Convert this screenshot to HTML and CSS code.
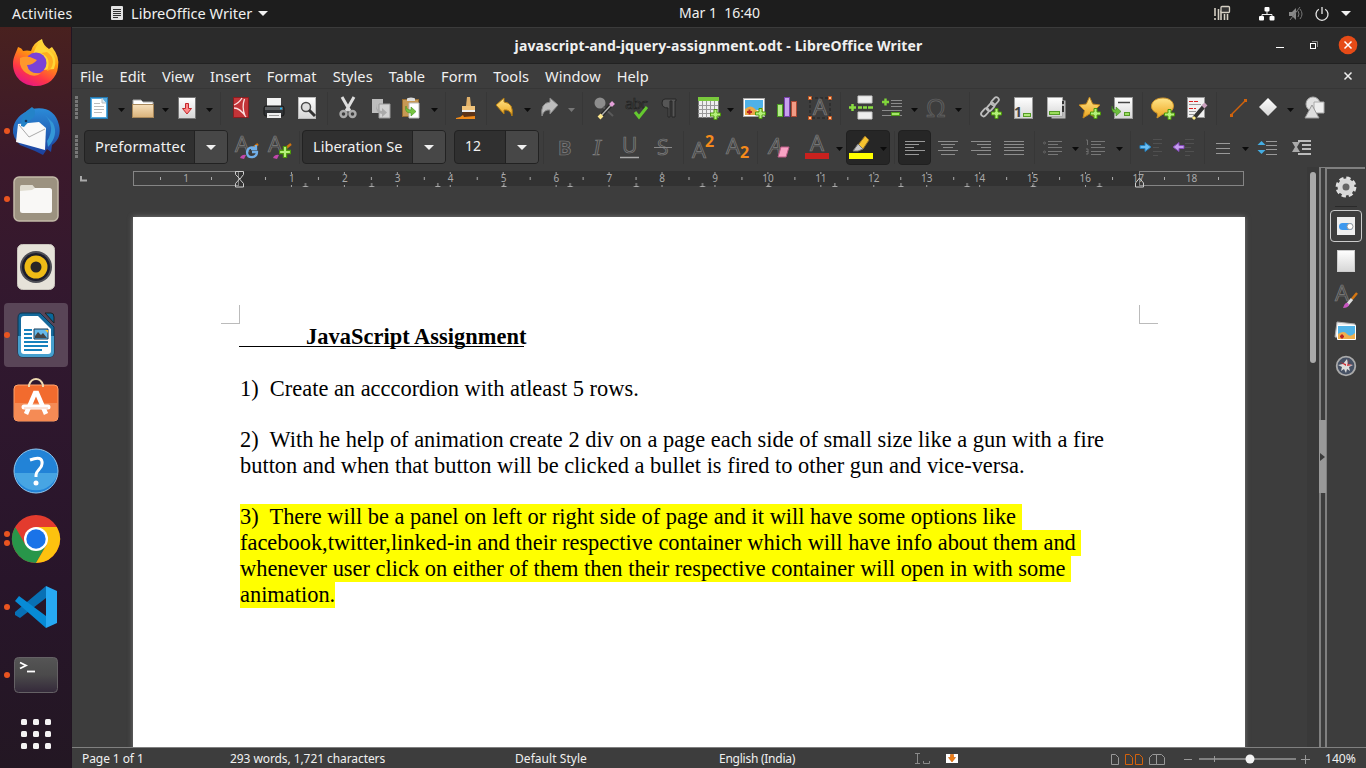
FILE: index.html
```html
<!DOCTYPE html>
<html lang="en">
<head>
<meta charset="utf-8">
<title>javascript-and-jquery-assignment.odt - LibreOffice Writer</title>
<link rel="stylesheet" href="styles.css">
</head>
<body>
<svg class="defs" width="0" height="0">
<defs>
<linearGradient id="paper" x2="0" y2="1"><stop stop-color="#fff"/><stop offset="1" stop-color="#d6d6d6"/></linearGradient>
<linearGradient id="gold" x2="0" y2="1"><stop stop-color="#ffe58a"/><stop offset="1" stop-color="#eda41c"/></linearGradient>
<linearGradient id="folder" x2="0" y2="1"><stop stop-color="#f6dfbb"/><stop offset="1" stop-color="#d9b27a"/></linearGradient>
<linearGradient id="fox" x1=".8" y1="0" x2=".3" y2="1"><stop stop-color="#fff44f"/><stop offset=".4" stop-color="#ff980e"/><stop offset=".75" stop-color="#ff3647"/><stop offset="1" stop-color="#e31587"/></linearGradient>
<linearGradient id="bird" x2="0" y2="1"><stop stop-color="#2b8bd8"/><stop offset="1" stop-color="#1c3f9c"/></linearGradient>
<linearGradient id="term" x2="0" y2="1"><stop stop-color="#555"/><stop offset=".5" stop-color="#4b4a4b"/><stop offset="1" stop-color="#34293a"/></linearGradient>
<symbol id="down" viewBox="0 0 8 5" preserveAspectRatio="none"><path d="M0 0h8L4 5z" fill="currentColor"/></symbol>
<symbol id="plus" viewBox="0 0 11 11"><path d="M4 .5h3V4h3.500v3H7v3.500H4V7H.5V4H4z" fill="#b5f07a" stroke="#4c9a0a"/></symbol>
</defs>
</svg>

<header class="topbar">
  <span class="activities">Activities</span>
  <svg class="doc-ic" width="12" height="15"><rect width="12" height="14" rx="1" fill="#e3e3e3"/><path d="M2 3.500h8M2 5.500h8M2 7.500h8M2 9.500h8M2 11.500h5" stroke="#333"/></svg>
  <span class="app">LibreOffice Writer</span>
  <svg class="app-arrow" width="10" height="5"><use href="#down"/></svg>
  <span class="clock">Mar 1&nbsp; 16:40</span>
  <div class="tray">
    <svg width="18" height="16"><path d="M1 2v8M1 12v2M4.500 3v11M7 14V6q0-2 3-2M10.500 8v6M13.500 8v6" stroke="#d5cfc3" stroke-width="1.600" fill="none"/><rect x="7" y=".5" width="8.500" height="6" rx="1" fill="#333" stroke="#d5cfc3" stroke-width="1.300"/></svg>
    <svg width="16" height="14"><path d="M8 4v3M3 10V7.500h10V10" stroke="#eee" fill="none"/><rect x="5.500" y="0" width="5" height="4.500" rx="1" fill="#fff"/><rect x="0" y="9" width="5" height="4.500" rx="1" fill="#fff"/><rect x="10.500" y="9" width="5" height="4.500" rx="1" fill="#fff"/></svg>
    <svg width="16" height="16"><path d="M1 6h3l4-4v12L4 10H1z" fill="#888"/><path d="M10 5q2 3 0 6M12 3q4 5 0 10M2 14L12 1" stroke="#777" fill="none"/></svg>
    <svg width="14" height="14"><path d="M3.800 2.200a6 6 0 1 0 6.400 0M7 0v7" stroke="#e8e8e8" stroke-width="1.300" fill="none"/></svg>
    <svg width="10" height="5"><use href="#down"/></svg>
  </div>
</header>

<div class="desktop">
<nav class="dock">
  <div class="app-ic i1"><svg width="46" height="48" viewBox="0 0 46 48"><path d="M5 8Q9 9 10 12Q14 11 18 12Q20 4 29 0Q30 6 36 10L39 8Q47 18 45 28C44 39 35 47 23 47C10 47 0 38 0 25C0 18 3 14 5 8Z" fill="url(#fox)"/><path d="M28 1Q29 8 38 13Q45 19 41 30L30 31L20 15Q23 7 28 1Z" fill="#ffd536"/><circle cx="23" cy="24" r="10.500" fill="#7b42d6"/><path d="M7 19Q11 17 17 18L24 21Q20 26 14 26Q16 36 28 34Q24 38 17 36Q9 33 7 25Z" fill="#ff972c"/><path d="M28 14Q39 18 34 32Q39 31 40 23Q40 17 34 13Z" fill="#ffad20"/></svg></div>
  <div class="app-ic i2 running"><svg width="48" height="48" viewBox="0 0 48 48"><path d="M20 2Q42 -2 47 18Q50 31 40 38L39 45L35 42L31 48L23 44L8 38Q0 30 1 22Q3 8 20 2Z" fill="url(#bird)"/><path d="M33 8Q44 20 35 34L36 40Q47 28 41 16Z" fill="#3497d6"/><path d="M6 17L27 15L34 21L33 43L4 35Z" fill="#fafafa"/><path d="M7 18L17 30L33 22" stroke="#aaa" fill="none"/><path d="M9 19Q8 7 20 0Q25 3 22 10Q17 14 12 20Z" fill="#2483c8"/><circle cx="14" cy="14" r="1.300" fill="#16365c"/></svg></div>
  <div class="app-ic i3 running"><svg width="46" height="46"><rect x="1" y="1" width="44" height="44" rx="5" fill="#9c9280" stroke="#c3baa8" stroke-width="1.500"/><rect x="7" y="12" width="32" height="25" rx="2.500" fill="#f9f8f6"/><path d="M7 15V11q0-2 1.500-2h11l2.500 3-3 2z" fill="#e0dcd0"/></svg></div>
  <div class="app-ic i4"><svg width="38" height="46"><rect x=".5" y=".5" width="37" height="45" rx="5" fill="#e6e2d9" stroke="#c9c5bd"/><circle cx="19" cy="23" r="16" fill="#4e4e55"/><circle cx="19" cy="23" r="14" fill="#1c1d2b"/><circle cx="19" cy="23" r="11.500" fill="#eebb16"/><circle cx="19" cy="23" r="5.500" fill="#282626"/></svg></div>
  <div class="app-ic i5 running active"><svg width="38" height="46"><path d="M5 1H23L37 15V40q0 5-5 5H6q-5 0-5-5V6q0-5 4-5z" fill="#15699b" stroke="#0d3650"/><path d="M1 24H37V40q0 5-5 5H6q-5 0-5-5z" fill="#459fce"/><path d="M28 1h6q3 0 3 4v6z" fill="#09679b" stroke="#222"/><path d="M7 4H21L34 17V39q0 3-3 3H7q-3 0-3-3V7q0-3 3-3z" fill="#fff"/><path d="M7 18h8M7 22h8M7 26h8M7 30h24M7 34h24M7 38h18" stroke="#1681bd" stroke-width="2"/><path d="M17 17h14v10H17z" fill="#65b9ea" stroke="#183d58"/><path d="M28 18h3v3z" fill="#ffc627"/><path d="M18 26v-2l3-4 3 3 2-2 4 5z" fill="#444"/></svg></div>
  <div class="app-ic i6"><svg width="46" height="44"><rect x="1" y="7" width="44" height="36" rx="4" fill="#f26b2e" stroke="#ffa36c"/><path d="M1.500 25h43v14q0 3.500-3.500 3.500H5q-3.500 0-3.500-3.500z" fill="#f58b55"/><path d="M16 9V7q2-6 7-6t7 6v2" stroke="#eed9b0" stroke-width="2" fill="none"/><path d="M13 36L22 15h2l9 21" stroke="#fff" stroke-width="4.500" fill="none"/><path d="M11 29h24" stroke="#fff" stroke-width="5" stroke-linecap="round"/><path d="M11 30h24" stroke="#f8cbb7"/></svg></div>
  <div class="app-ic i7"><svg width="46" height="46"><circle cx="23" cy="23" r="22" fill="#2283d7" stroke="#8fc7ef"/><path d="M1.500 25h43A22 22 0 0 1 1.500 25" fill="#47a5e3"/><path d="M17 12q13-5 12 4c0 5-6 6-6 11v2" stroke="#fff" stroke-width="3" fill="none"/><circle cx="23" cy="35" r="2.500" fill="#fff"/></svg></div>
  <div class="app-ic i8 running two"><svg width="48" height="48"><circle cx="24" cy="24" r="24" fill="#e33b2e"/><path d="M3.200 12A24 24 0 0 0 24 48L35 29L24 24Z" fill="#28964a"/><path d="M24 48A24 24 0 0 0 44.800 12H24L34.500 30Z" fill="#fdc20f"/><path d="M3.200 12L13.500 30L24 24V12Z" fill="#e33b2e"/><circle cx="24" cy="24" r="12" fill="#fff"/><circle cx="24" cy="24" r="9.700" fill="#1a73e8"/></svg></div>
  <div class="app-ic i9 running"><svg width="42" height="42"><path d="M0 26L31 0V12L5 32L0 29Z" fill="#0870b5"/><path d="M0 15L4 10L31 30V42Q15 28 0 15Z" fill="#078bd6"/><path d="M31 0L42 5V37L31 42Z" fill="#27a9f3"/></svg></div>
  <div class="app-ic i10 running"><svg width="44" height="36"><rect x=".5" y=".5" width="43" height="35" rx="4" fill="url(#term)" stroke="#656165"/><path d="M6 5.500l6 3-6 3" stroke="#fff" stroke-width="1.800" fill="none"/><path d="M13 14.500h8" stroke="#fff" stroke-width="1.800"/></svg></div>
  <div class="app-ic i11"><svg width="30" height="30"><g fill="#f4f2f3"><rect width="6" height="6" rx="1.500"/><rect x="12" width="6" height="6" rx="1.500"/><rect x="24" width="6" height="6" rx="1.500"/><rect y="12" width="6" height="6" rx="1.500"/><rect x="12" y="12" width="6" height="6" rx="1.500"/><rect x="24" y="12" width="6" height="6" rx="1.500"/><rect y="24" width="6" height="6" rx="1.500"/><rect x="12" y="24" width="6" height="6" rx="1.500"/><rect x="24" y="24" width="6" height="6" rx="1.500"/></g></svg></div>
</nav>

<main class="window">
  <div class="titlebar">
    <h1>javascript-and-jquery-assignment.odt - LibreOffice Writer</h1>
    <div class="win-btns">
      <svg width="10" height="10"><path d="M2 7.500h8" stroke="#fff"/></svg>
      <svg width="10" height="10"><path d="M4 1.500h5.500v5.500" stroke="#888" fill="none"/><rect x="2.500" y="3.500" width="5" height="5" fill="none" stroke="#fff"/></svg>
      <svg width="20" height="20"><circle cx="10" cy="10" r="9.300" fill="#e64b17"/><path d="M6.500 6.500l7 7M13.500 6.500l-7 7" stroke="#fff" stroke-width="1.500"/></svg>
    </div>
  </div>
  <div class="menubar">
    <span>File</span><span>Edit</span><span>View</span><span>Insert</span><span>Format</span><span>Styles</span><span>Table</span><span>Form</span><span>Tools</span><span>Window</span><span>Help</span>
    <svg width="8" height="8"><path d="M.5 .5l7 7M7.500 .5l-7 7" stroke="#eee" stroke-width="1.500"/></svg>
  </div>

  <div class="toolbar standard">
    <i class="handle"></i>
    <svg class="ic"><rect x="3.500" y="1.500" width="17" height="21" fill="#55abe0" stroke="#2479b2"/><path d="M5 3h10l4 4v14H5z" fill="#fff"/><path d="M7 7.500h6M7 10.500h10M7 13.500h10M7 16.500h8" stroke="#bbb"/><path d="M15 2v5h4" fill="#d9eefa" stroke="#bbb"/></svg>
    <svg class="arr"><use href="#down"/></svg>
    <svg class="ic"><path d="M2 20V4h8l2 2h10v14" fill="#fff" stroke="#aaa"/><rect x="1.500" y="8.500" width="21" height="13" fill="url(#folder)" stroke="#a9885a"/></svg>
    <svg class="arr"><use href="#down"/></svg>
    <svg class="ic"><rect x="3.500" y="1.500" width="17" height="21" fill="url(#paper)" stroke="#777"/><path d="M10.500 7.500h3v5h3L12 18l-4.500-5.500h3z" fill="#f88" stroke="#c2272b"/></svg>
    <svg class="arr"><use href="#down"/></svg>
    <i class="sep"></i>
    <svg class="ic"><rect x="4.500" y="1.500" width="15" height="20" fill="#c23438" stroke="#8b1d20"/><path d="M5 9Q10 7 13 2M5 12Q11 12 17 21M15.500 3Q12.500 11 16 20" stroke="#fbe0e0" fill="none" stroke-width="1.300"/></svg>
    <svg class="ic"><path d="M5 2h14v9H5z" fill="#f3f3f3"/><rect x="2" y="10" width="20" height="10" rx="2" fill="#303235" stroke="#191919"/><path d="M3 11h18v3H3z" fill="#5b5e60"/><circle cx="19" cy="12.500" r="1" fill="#19bcff"/><path d="M5 17h14v5H5z" fill="#eee"/><path d="M7 19.500h10" stroke="#999"/></svg>
    <svg class="ic"><rect x="3.500" y="1.500" width="17" height="21" fill="url(#paper)" stroke="#bbb"/><circle cx="11" cy="11" r="4.500" fill="#ddd" stroke="#4b4b4b" stroke-width="1.500"/><path d="M14 14l6 6" stroke="#333" stroke-width="3"/></svg>
    <i class="sep"></i>
    <svg class="ic"><path d="M6 1l8 14M18 1l-8 14" stroke="#dedede" stroke-width="3"/><circle cx="7.500" cy="18" r="3" fill="none" stroke="#aaa" stroke-width="2.400"/><circle cx="16.500" cy="18" r="3" fill="none" stroke="#aaa" stroke-width="2.400"/></svg>
    <svg class="ic"><path d="M3 3h11v14H3z" fill="#bdbdbd"/><path d="M10 8h11v14H10z" fill="#d2d2d2" stroke="#999"/><path d="M7 8q0 7 6 7v-3l5 4.500-5 4.500v-3q-7-1-6-10" fill="#aaa"/></svg>
    <svg class="ic"><rect x="2.500" y="3.500" width="16" height="17" fill="#c79954" stroke="#946b31"/><path d="M7 5V3q0-1.500 4-1.500t4 1.500v2z" fill="#ddd"/><path d="M9 7h10v15H9z" fill="#fff" stroke="#bbb"/><path d="M6 10q0 4 5 4v-3l5 4.500-5 4.500v-3q-7 0-5-7" fill="#76c442" stroke="#42921c" stroke-width=".6"/></svg>
    <svg class="arr"><use href="#down"/></svg>
    <i class="sep"></i>
    <svg class="ic"><path d="M12 1h3l1 9h-5z" fill="#e1b16a"/><path d="M7 10h13v4H7z" fill="#efc37b"/><path d="M7 14h13v2H7z" fill="#eee"/><path d="M8 16h12v5H6z" fill="#5d3418"/><path d="M1 22q4 0 7-3l1 2 11-1v3H1z" fill="#f08a19"/></svg>
    <i class="sep"></i>
    <svg class="ic"><path d="M3 9L11 2v4q10 1 8 14q-2-7-8-6v4z" fill="url(#gold)" stroke="#b27b12"/></svg>
    <svg class="arr"><use href="#down"/></svg>
    <svg class="ic"><path d="M21 9L13 2v4q-10 1-8 14q2-7 8-6v4z" fill="#bdbdbd" stroke="#888"/></svg>
    <svg class="arr dim"><use href="#down"/></svg>
    <i class="sep"></i>
    <svg class="ic"><circle cx="8" cy="7" r="5.500" fill="#8d8d8d"/><path d="M11 11l10 9" stroke="#5a5a5a" stroke-width="2"/><path d="M20 8L8 21" stroke="#262626" stroke-width="4"/><path d="M20 8L8 21" stroke="#aaa" stroke-width="1.500"/><path d="M18.500 9.500l3-3" stroke="#e4a0d9" stroke-width="4"/><path d="M7 22l3-3" stroke="#ffe88c" stroke-width="4"/></svg>
    <svg class="ic"><text x="0" y="13" textLength="23" class="abc">abc</text><path d="M10 16l4 5 8-10" stroke="#65c92f" stroke-width="3" fill="none"/></svg>
    <svg class="ic"><path d="M8 3h11v2h-1v16h-3V5h-2v16h-2v-9q-6 0-6-5 0-4 3-4z" fill="#565656" stroke="#262626"/></svg>
    <i class="sep"></i>
    <svg class="ic"><rect x="1.500" y="1.500" width="20" height="20" fill="#eee" stroke="#777"/><path d="M1 1h21v4H1z" fill="#79c93c"/><path d="M1 9.500h20M1 13.500h20M1 17.500h20M5.500 5v17M9.500 5v17M13.500 5v17M17.500 5v17" stroke="#999"/><use href="#plus" x="13" y="13" width="11" height="11"/></svg>
    <svg class="arr"><use href="#down"/></svg>
    <svg class="ic"><rect x="1.500" y="2.500" width="21" height="18" fill="#fff" stroke="#aaa"/><path d="M3 4h18v10H3z" fill="#4eb1e8"/><path d="M3 13q6-5 10 0t8-2v8H3z" fill="#eaa847"/><path d="M5 16h5M7.500 13.500v5" stroke="#b92222" stroke-width="2"/><use href="#plus" x="13" y="12" width="11" height="11"/></svg>
    <svg class="ic"><rect x="2.500" y="8.500" width="5" height="12" fill="#b5eb8b" stroke="#4c9c22"/><rect x="9.500" y="1.500" width="5" height="19" fill="#c7a0ee" stroke="#7941ac"/><rect x="16.500" y="5.500" width="5" height="15" fill="#f19c85" stroke="#ac4a35"/></svg>
    <svg class="ic"><rect x="2" y="2" width="20" height="20" fill="none" stroke="#222" stroke-dasharray="3 2"/><text x="5" y="19" class="big">A</text><path d="M.5 .5h3v3h-3zM20.500 .5h3v3h-3zM.5 20.500h3v3h-3zM20.500 20.500h3v3h-3z" fill="#ffbd89" stroke="#c25521"/></svg>
    <i class="sep"></i>
    <svg class="ic"><path d="M9 0h14v7H9zM9 16h14v7H9z" fill="#eee" stroke="#ccc"/><path d="M0 11.500h7M3.500 8v7M9 11.500h15" stroke="#89dd42" stroke-width="2.500"/><path d="M13.500 10v3M18.500 10v3" stroke="#3d3d3d"/></svg>
    <svg class="ic"><path d="M11 4.500h11M11 7.500h11M11 10.500h11M2 14.500h20M2 19.500h20" stroke="#8b8b8b"/><path d="M2 6h7M5.500 2.500v7" stroke="#80d63a" stroke-width="2.400"/><rect x="11.500" y="16.500" width="8" height="3" fill="#a5e668" stroke="#519b1b"/></svg>
    <svg class="arr"><use href="#down"/></svg>
    <svg class="ic"><text x="1" y="21" textLength="21" class="omega">Ω</text></svg>
    <svg class="arr"><use href="#down"/></svg>
    <i class="sep"></i>
    <svg class="ic"><g fill="none" stroke="#bdbdbd" stroke-width="1.800"><rect x="12" y="3" width="9" height="5" rx="2.500" transform="rotate(-48 16 6)"/><rect x="7" y="9" width="9" height="5" rx="2.500" transform="rotate(-48 11 11)"/><rect x="2" y="14" width="9" height="5" rx="2.500" transform="rotate(-48 6 17)"/></g><use href="#plus" x="12" y="12" width="11" height="11"/></svg>
    <svg class="ic"><rect x="3.500" y="1.500" width="18" height="21" fill="url(#paper)" stroke="#999"/><text x="3" y="21" class="one">1</text><rect x="12.500" y="17.500" width="7" height="3" fill="#afe879" stroke="#559c26"/></svg>
    <svg class="ic"><path d="M7.500 4.500h14v18h-14z" fill="#bbb"/><path d="M3.500 1.500h15v19h-15z" fill="url(#paper)" stroke="#aaa"/><path d="M19 5v3M19 10v6" stroke="#333" stroke-width="2"/><rect x="5.500" y="15.500" width="10" height="3" fill="#9bdd5c" stroke="#559c26"/></svg>
    <svg class="ic"><path d="M11.500 1l3.200 7 7.300 1-5.500 5.500L18 22l-6.500-4L5 22l1.500-7.500L1 9l7.300-1z" fill="url(#gold)" stroke="#c38820"/><use href="#plus" x="12" y="12" width="11" height="11"/></svg>
    <svg class="ic"><rect x="4.500" y="1.500" width="18" height="21" fill="url(#paper)" stroke="#999"/><path d="M8 6.500h12" stroke="#444" stroke-width="1.500"/><path d="M2 10q0 4 4 4v-3l5 4.500L6 20v-3q-5 0-4-7" fill="#6dbf3d" stroke="#3c861a" stroke-width=".6"/><rect x="14.500" y="16.500" width="5" height="3" fill="#9ade5f" stroke="#579928"/></svg>
    <i class="sep"></i>
    <svg class="ic"><path d="M12 2c14 0 14 16 0 16l-6 4q1-3 0-5C-3 14-1 2 12 2z" fill="url(#gold)" stroke="#cf952a"/><use href="#plus" x="13" y="13" width="11" height="11"/></svg>
    <svg class="ic"><rect x="2.500" y="1.500" width="17" height="20" fill="#f1f1f1" stroke="#999"/><path d="M4 5.500h10M4 12.500h7" stroke="#d22" stroke-dasharray="4 1"/><path d="M4 8.500h12M4 15.500h7M4 18.500h5" stroke="#999"/><path d="M20 9L9 22" stroke="#333" stroke-width="4"/><path d="M21 8l-3 3" stroke="#c9a0bd" stroke-width="4"/><path d="M8 23l2-2" stroke="#ffed87" stroke-width="3"/></svg>
    <i class="sep"></i>
    <svg class="ic"><path d="M5 19L19 5" stroke="#d1630c" stroke-width="1.500"/><path d="M4 18h3v3H4zM18 3h3v3h-3z" fill="#d1630c"/></svg>
    <svg class="ic"><path d="M12 2l9 9-9 9-9-9z" fill="url(#paper)"/></svg>
    <svg class="arr"><use href="#down"/></svg>
    <svg class="ic"><circle cx="11" cy="8" r="7" fill="#e1e1e1" stroke="#aaa"/><path d="M12 6h10v11H12z" fill="#eee" stroke="#aaa"/><path d="M10 9l7 13H3z" fill="#ddd" stroke="#999"/></svg>
  </div>

  <div class="toolbar formatting">
    <i class="handle"></i>
    <div class="combo"><b class="clip">Preformatted</b><span><svg width="10" height="5"><use href="#down"/></svg></span></div>
    <svg class="ic"><text x="0" y="17" class="big">A</text><path d="M5 23q2-4 6-3l-2 4z" fill="#c247ab"/><path d="M18 13l5-4" stroke="#d07410" stroke-width="2.500"/><path d="M20 13q-7-2-8 4 0 6 6 5 4-1 4-5h-5M21 10v4h-5" fill="none" stroke="#71afe9" stroke-width="2.300"/></svg>
    <svg class="ic"><text x="0" y="17" class="big">A</text><path d="M5 23q2-4 6-3l-2 4z" fill="#c247ab"/><path d="M18 13l5-4" stroke="#d07410" stroke-width="2.500"/><use href="#plus" x="11" y="11" width="12" height="12"/></svg>
    <i class="sep"></i>
    <div class="combo"><b>Liberation Se</b><span><svg width="10" height="5"><use href="#down"/></svg></span></div>
    <div class="combo size"><b>12</b><span><svg width="10" height="5"><use href="#down"/></svg></span></div>
    <i class="sep"></i>
    <svg class="ic"><text x="6" y="20" class="letter bold">B</text></svg>
    <svg class="ic"><text x="8" y="20" class="letter serif">I</text></svg>
    <svg class="ic"><text x="4" y="18" class="letter">U</text><path d="M2 22.500h19" stroke="#aaa" stroke-width="1.500"/></svg>
    <svg class="ic"><text x="6" y="20" class="letter">S</text><path d="M3 12.500h18" stroke="#888"/></svg>
    <i class="sep"></i>
    <svg class="ic"><text x="1" y="23" class="big">A</text><text x="14" y="12" class="two">2</text></svg>
    <svg class="ic"><text x="0" y="19" class="big">A</text><text x="14" y="23" class="two">2</text></svg>
    <i class="sep"></i>
    <svg class="ic"><text x="1" y="19" class="big italic">A</text><path d="M13 12h8l-3 10h-8z" fill="#f8a3c4" stroke="#bd5d88"/></svg>
    <svg class="ic"><text x="5" y="16" class="big">A</text><path d="M0 18h24v6H0z" fill="#c9211e"/></svg>
    <svg class="arr"><use href="#down"/></svg>
    <div class="pressed split"><svg class="ic"><path d="M9 10l7-9 4 4-6 9z" fill="#f5c22f" stroke="#967027"/><path d="M4 16l5-7 5 5-5 2z" fill="#ccc" stroke="#777"/><path d="M0 18h24v6H0z" fill="#ff0"/></svg><svg class="arr"><use href="#down"/></svg></div>
    <i class="sep"></i>
    <div class="pressed"><svg class="ic"><path d="M2 6.500h20M2 9.500h14M2 12.500h9M2 15.500h20M2 19.500h14" stroke="#999"/></svg></div>
    <svg class="ic"><path d="M2 6.500h20M5 9.500h14M7 12.500h10M2 15.500h20M5 19.500h14" stroke="#8d8d8d"/></svg>
    <svg class="ic"><path d="M2 6.500h20M8 9.500h14M12 12.500h10M2 15.500h20M8 19.500h14" stroke="#8d8d8d"/></svg>
    <svg class="ic"><path d="M2 6.500h20M2 9.500h20M2 12.500h20M2 15.500h20M2 19.500h20" stroke="#8d8d8d"/></svg>
    <i class="sep"></i>
    <svg class="ic"><path d="M7 6.500h14M7 9.500h10M7 12.500h14M7 16.500h14M7 19.500h10" stroke="#777"/><circle cx="3.500" cy="8" r="1" fill="none" stroke="#666"/><circle cx="3.500" cy="17" r="1" fill="none" stroke="#666"/></svg>
    <svg class="arr"><use href="#down"/></svg>
    <svg class="ic"><path d="M7 6.500h14M7 9.500h10M7 12.500h14M7 16.500h14M7 19.500h10" stroke="#777"/><path d="M2 5h1.500v5M2 14h2v2.500H2M4 16v3H2" fill="none" stroke="#6f6f6f"/></svg>
    <svg class="arr"><use href="#down"/></svg>
    <i class="sep"></i>
    <svg class="ic"><path d="M1 10.500h5v-3l6 4.500-6 4.500v-3H1z" fill="#69bdf3" stroke="#2580bd"/><path d="M14 4.500h9M14 8.500h9M14 12.500h6M14 16.500h9M14 20.500h5" stroke="#505050"/></svg>
    <svg class="ic"><path d="M12 10.500H7v-3L1 12l6 4.500v-3h5z" fill="#c59bef" stroke="#8249b7"/><path d="M13 4.500h9M13 8.500h9M13 12.500h6M13 16.500h9M13 20.500h5" stroke="#505050"/></svg>
    <i class="sep"></i>
    <svg class="ic"><path d="M5 8.500h14M5 13.500h14M5 18.500h14" stroke="#999"/></svg>
    <svg class="arr"><use href="#down"/></svg>
    <svg class="ic"><path d="M10 6.500h11M10 10.500h11M10 14.500h11M10 19.500h11" stroke="#999"/><path d="M1.500 10l4-4 4 4zM1.500 15l4 4 4-4z" fill="#44aee4"/></svg>
    <svg class="ic"><path d="M3 7h8l-3 5 3 5H3l3-5z" fill="#aaa"/><path d="M9 6h13M13 10h9M13 14h9M9 19h13" stroke="#bbb" stroke-width="2"/></svg>
  </div>

  <div class="workspace">
    <section class="canvas">
      <div class="ruler">
        <svg class="tabmark" width="7" height="6"><path d="M1 0v4.500H7" fill="none" stroke="#aaa" stroke-width="2"/></svg>
        <div class="ruler-margin left"><i></i><span>1</span><i></i></div>
        <div class="ruler-body">
          <svg class="ticks" width="912" height="20" viewBox="-6 0 912 20">
            <defs><pattern id="cm" width="52.940" height="20" patternUnits="userSpaceOnUse"><path d="M26.500 6v3M52.500 1v2M52.500 14v2" stroke="#aaa"/></pattern><pattern id="tab" x="33" width="66.170" height="20" patternUnits="userSpaceOnUse"><path d="M33.500 12v4M31 15.500h5" stroke="#aaa"/></pattern></defs>
            <rect width="897" height="20" fill="url(#cm)"/><rect x="33" width="850" height="20" fill="url(#tab)"/>
            <path d="M-3.500 .5h8v3L1 8l-4.500-4.500zM-3.500 16h8v-3.500L.5 8l-4 4.500zM896.500 16h8v-4L900.500 7l-4 5z" fill="none" stroke="#ccc"/>
          </svg>
          <span>1</span><span>2</span><span>3</span><span>4</span><span>5</span><span>6</span><span>7</span><span>8</span><span>9</span><span>10</span><span>11</span><span>12</span><span>13</span><span>14</span><span>15</span><span>16</span><span>17</span>
        </div>
        <div class="ruler-margin right"><i></i><span>18</span><i></i></div>
      </div>
      <article class="page">
        <div class="corners"><i></i><i></i></div>
        <h2>JavaScript Assignment</h2>
        <p>1)&nbsp; Create an acccordion with atleast 5 rows.</p>
        <p>2)&nbsp; With he help of animation create 2 div on a page each side of small size like a gun with a fire <br>button and when that button will be clicked a bullet is fired to other gun and vice-versa.</p>
        <p><mark>3)&nbsp; There will be a panel on left or right side of page and it will have some options like&nbsp;</mark><br><mark>facebook,twitter,linked-in and their respective container which will have info about them and&nbsp;</mark><br><mark>whenever user click on either of them then their respective container will open in with some&nbsp;</mark><br><mark>animation.</mark></p>
      </article>
    </section>
    <div class="scroll"><i></i></div>
    <div class="splitter"><span><svg width="5" height="8"><path d="M0 0l5 4-5 4z" fill="#3b3b3b"/></svg></span></div>
    <aside class="sidebar">
      <svg width="24" height="24"><circle cx="12" cy="12" r="6" fill="#666" stroke="#d8d8d8" stroke-width="5"/><circle cx="12" cy="12" r="9.200" fill="none" stroke="#e0e0e0" stroke-width="2.400" stroke-dasharray="4.400 2.826"/></svg>
      <i class="hr"></i>
      <div class="chosen"><svg width="18" height="18"><rect width="18" height="18" fill="#eee"/><rect x="2" y="6" width="14" height="7" rx="3.500" fill="#3d98ee"/><circle cx="13" cy="9.500" r="3" fill="#fff" stroke="#999"/></svg></div>
      <svg width="18" height="22"><rect x=".5" y=".5" width="17" height="21" fill="url(#paper)" stroke="#ccc"/></svg>
      <svg width="24" height="24"><text x="1" y="16" class="big">A</text><path d="M23 8l-5 6" stroke="#d57712" stroke-width="2.500"/><path d="M18 14l-5 6" stroke="#ddd" stroke-width="3"/><path d="M14 18q-3-1-5 5 5 0 6-3" fill="#c856c2"/></svg>
      <svg width="24" height="24"><path d="M3 3l18 2v15L1 18z" fill="#eee" stroke="#aaa"/><path d="M3.500 6.500h18v14h-18z" fill="#51b4e8" stroke="#fff"/><path d="M4 15q6-4 9 0t8-1v6H4z" fill="#efb04f"/><path d="M6 17.500h4M8 15.500v4" stroke="#b22" stroke-width="2"/></svg>
      <svg width="24" height="24"><circle cx="12" cy="12" r="9.300" fill="#465164" stroke="#aaa" stroke-width="1.800"/><path d="M13 5l1 5 5 1-4 2 1 4-3-2-1 4-2-4-3 2 1-4-4-2 5-1z" fill="#ddd"/><path d="M15 4l-1 6 4 1-5 1zM6 8l6 2v2z" fill="#cc2c34"/></svg>
    </aside>
  </div>

  <footer class="status">
    <span>Page 1 of 1</span><span>293 words, 1,721 characters</span><span class="style">Default Style</span><span class="lang">English (India)</span>
    <svg class="ins" width="16" height="12"><path d="M0 .5h5M2.500 1v9M0 10.500h5M8.500 8v2.500h6V8" stroke="#8a8a8a" fill="none"/></svg>
    <svg class="mod" width="12" height="10"><rect width="12" height="9" fill="#fff"/><path d="M4.500 .5h3v3h2L6 8 2.500 3.500h2z" fill="#ef7d13" stroke="#c85d05" stroke-width=".6"/></svg>
    <svg class="views" width="55" height="11"><path d="M.5 .5h4l3 3v7h-7z" stroke="#999" fill="none"/><path d="M14.500 .5h4l3 3v7h-7zM24.500 .5h4l3 3v7h-7z" stroke="#d3610b" fill="none"/><path d="M38.500 10.500v-7l3-3h4v10zM45.500 .5h5l3 3v7h-8z" stroke="#999" fill="none"/></svg>
    <svg class="zoom" width="126" height="14"><path d="M0 7.500h8M117 7.500h9M121.500 3v9M30.500 4v6" stroke="#999"/><path d="M15 7h97" stroke="#999" stroke-width="1.500"/><circle cx="66" cy="7" r="4.500" fill="#f3f3f3"/></svg>
    <span class="pct">140%</span>
  </footer>
</main>
</div>
</body>
</html>
```
FILE: styles.css
```css
* { box-sizing: border-box; }
body { margin: 0; width: 1366px; height: 768px; overflow: hidden; background: #3d3d3d; color: #f0f0f0; font: 14.6px/18px "Noto Sans", "Open Sans", sans-serif; }
svg { display: block; flex: none; overflow: visible; }
.defs { position: absolute; }

.topbar { display: grid; grid-template-columns: 99px 20px 127px 421px 535px 152px; height: 27px; align-items: center; padding-left: 12px; background: #1d1d1d; }
.activities { font-size: 14px; letter-spacing: .2px; }
.app { margin-top: -1px; }
.clock { font-size: 14px; margin-top: -1px; }
.tray { display: grid; grid-template-columns: 45px 29px 27px 26px 10px; align-items: center; }

.desktop { display: flex; height: 741px; }
.dock { display: flex; flex-direction: column; width: 72px; background: linear-gradient(#49211f, #3b192b 18%, #31182f 40%, #28152a 75%, #231723); border-right: 1px solid #211522; }
.app-ic { position: relative; display: flex; align-items: center; justify-content: center; width: 64px; height: 64px; margin: 0 4px 4px; border-radius: 4px; flex: none; }
.i1 { margin-top: 4px; }
.i5 { margin-bottom: 1px; }
.i6 { margin-bottom: 7px; }
.i11 { margin-top: -9px; }
.active { background: #594557; }
.running::before { content: ""; position: absolute; left: 0; top: 29px; width: 6px; height: 6px; border-radius: 50%; background: #e95420; }
.two::before { top: 24px; box-shadow: 0 9px #e95420; }

.window { flex: 1; display: flex; flex-direction: column; min-width: 0; background: #3d3d3d; }
.titlebar { position: relative; height: 37px; background: #2b2b2b; border-top: 1px solid #3b3b3b; border-bottom: 1px solid #222; display: flex; align-items: center; justify-content: center; }
.titlebar h1 { margin: 0; padding-right: 1px; font-size: 14px; font-weight: 700; letter-spacing: .15px; }
.win-btns { position: absolute; right: 8px; top: 7px; display: flex; align-items: center; gap: 24px; }
.win-btns svg:last-child { margin-left: -4px; }
.menubar { height: 25px; display: flex; align-items: center; gap: 16px; padding: 0 14px 0 8px; border-bottom: 1px solid #363636; letter-spacing: .05px; }
.menubar span { margin-top: -1px; }
.menubar svg { margin-left: auto; margin-top: -1px; }

.toolbar { display: grid; align-items: center; flex: none; }
.standard { height: 38px; padding-left: 3px; grid-template-columns: 12px 30px 14px 30px 14px 30px 15px 9px 33px 33px 32px 9px 33px 31px 30px 15px 10px 31px 7px 30px 14px 30px 15px 10px 33px 32px 32px 8px 29px 16px 33px 33px 32px 9px 31px 30px 15px 29px 15px 10px 32px 33px 34px 32px 32px 9px 34px 31px 10px 30px 30px 16px 24px; }
.formatting { height: 40px; padding-left: 3px; grid-template-columns: 9px 151px 33px 31px 3px 152px 89px 9px 33px 33px 33px 32px 8px 35px 31px 11px 37px 30px 11px 48px 4px 38px 33px 33px 32px 7px 30px 13px 31px 15px 9px 33px 32px 7px 30px 15px 33px 24px; }
.ic { width: 24px; height: 24px; }
.arr { width: 7px; height: 4px; color: #0b0b0b; margin: 3px 0 0 1px; }
.arr.dim { color: #777; }
.sep { width: 1px; height: 33px; background: #373737; }
.handle { width: 3px; height: 24px; background: repeating-linear-gradient(#777 0 3px, transparent 3px 4px); }
.combo { display: flex; width: 144px; height: 34px; background: #303030; border: 1px solid #222; border-radius: 4px; overflow: hidden; }
.combo b { flex: 1; overflow: hidden; white-space: nowrap; margin: 6px 9px 0 10px; font-weight: 400; }
.combo .clip { letter-spacing: .15px; }
.combo span { width: 33px; flex: none; display: flex; align-items: center; justify-content: center; background: #474747; border-left: 1px solid #222; }
.combo.size { width: 85px; }
.combo.size b { font-size: 14px; }
.pressed { width: 33px; height: 35px; display: flex; align-items: center; padding-left: 4px; border-radius: 4px; background: #262626; border: 1px solid #202020; }
.pressed.split { width: 44px; padding-left: 2px; }
.split .arr { margin-left: 7px; }
.big, .letter, .omega, .abc { fill: #444; stroke: #808080; stroke-width: .7; font-family: "Open Sans", sans-serif; }
.big { font-size: 22px; }
.letter { font-size: 21px; }
.abc { stroke: #222; fill: #484848; font-size: 15px; }
.omega { font-size: 25px; stroke: #666; }
.bold { font-weight: 700; font-size: 20px; }
.italic { font-style: italic; }
.serif { font-family: "Liberation Serif", serif; font-style: italic; font-size: 24px; }
.two { font: 700 16px "Open Sans", sans-serif; fill: #f58a1b; }
.one { font: 700 14px "Open Sans", sans-serif; fill: #444; }

.workspace { flex: 1; min-height: 0; display: flex; }
.canvas { width: 1235px; overflow: hidden; }
.ruler { display: flex; height: 50px; padding: 4px 0 0 8px; color: #aaa; font-size: 10px; line-height: 14px; }
.tabmark { margin: 5px 46px 0 0; }
.ruler-margin { display: flex; justify-content: space-between; align-items: center; height: 15px; border: 1px solid #858585; padding: 0 26px; }
.ruler-margin i { width: 1px; height: 3px; background: #aaa; }
.ruler-margin span { margin-top: -1px; }
.ruler-margin.left { width: 106px; }
.ruler-margin.right { width: 105px; padding: 0 24px 0 24px; }
.ruler-body { position: relative; display: flex; width: 900px; height: 15px; padding-left: 26.500px; background: #323232; }
.ruler-body span { flex: 0 0 52.9px; text-align: center; }
.ruler-body span:last-child { margin-right: -30px; }
.ticks { position: absolute; left: -6px; top: 0; }
.page { width: 1112px; height: 700px; margin-left: 61px; padding: 88px 0 0 107px; background: #fff; color: #000; font: 22.4px/26px "Liberation Serif", serif; letter-spacing: .005px; box-shadow: 0 0 5px #777; white-space: nowrap; }
.corners { display: flex; justify-content: space-between; width: 937px; height: 19px; margin-left: -19px; }
.corners i { width: 19px; border: solid #bbb; border-width: 0 1px 1px 0; }
.corners i:last-child { border-width: 0 0 1px 1px; }
.page h2 { margin: 0 0 29px -1px; width: 285px; height: 23px; padding-left: 67px; border-bottom: 1px solid #000; font-size: 22.4px; line-height: 26px; font-weight: 700; letter-spacing: .04px; }
.page p { margin: 0 0 25px; }
mark { display: inline-block; height: 26px; background: #ff0; color: #000; }
.scroll { width: 12px; padding: 5px 3px; background: #393939; }
.scroll i { display: block; width: 6px; height: 191px; border-radius: 3px; background: #aaa; }
.splitter { width: 8px; padding-top: 252px; border: solid #808080; border-width: 1px 2px 0; }
.splitter span { display: flex; width: 7px; height: 73px; margin-left: -2px; align-items: center; padding-left: 1px; background: #999; }
.sidebar { flex: 1; display: flex; flex-direction: column; align-items: center; margin-right: 1px; padding-top: 6px; border-top: 2px solid #808080; }
.hr { width: 22px; height: 1px; margin: 7px 0 3px; background: #2a2a2a; }
.chosen { width: 32px; height: 32px; display: flex; align-items: center; justify-content: center; border: 1px solid #ccc; border-radius: 4px; margin-bottom: 8px; }
.sidebar > svg:nth-of-type(2) { margin-bottom: 13px; }
.sidebar > svg:nth-of-type(3) { margin-bottom: 10px; }
.sidebar > svg:nth-of-type(4) { margin-bottom: 11px; }

.status { display: grid; grid-template-columns: 148px 285px 204px 196px 31px 165px 73px 138px 40px; align-items: center; height: 21px; padding: 1px 0 0 10px; border-top: 1px solid #808080; font-size: 12px; letter-spacing: -.08px; white-space: nowrap; }
.status svg { margin-top: 1px; }
.style { letter-spacing: .05px; }
.lang { letter-spacing: -.25px; }
.pct { padding-left: 3px; font-size: 12.200px; }
```
